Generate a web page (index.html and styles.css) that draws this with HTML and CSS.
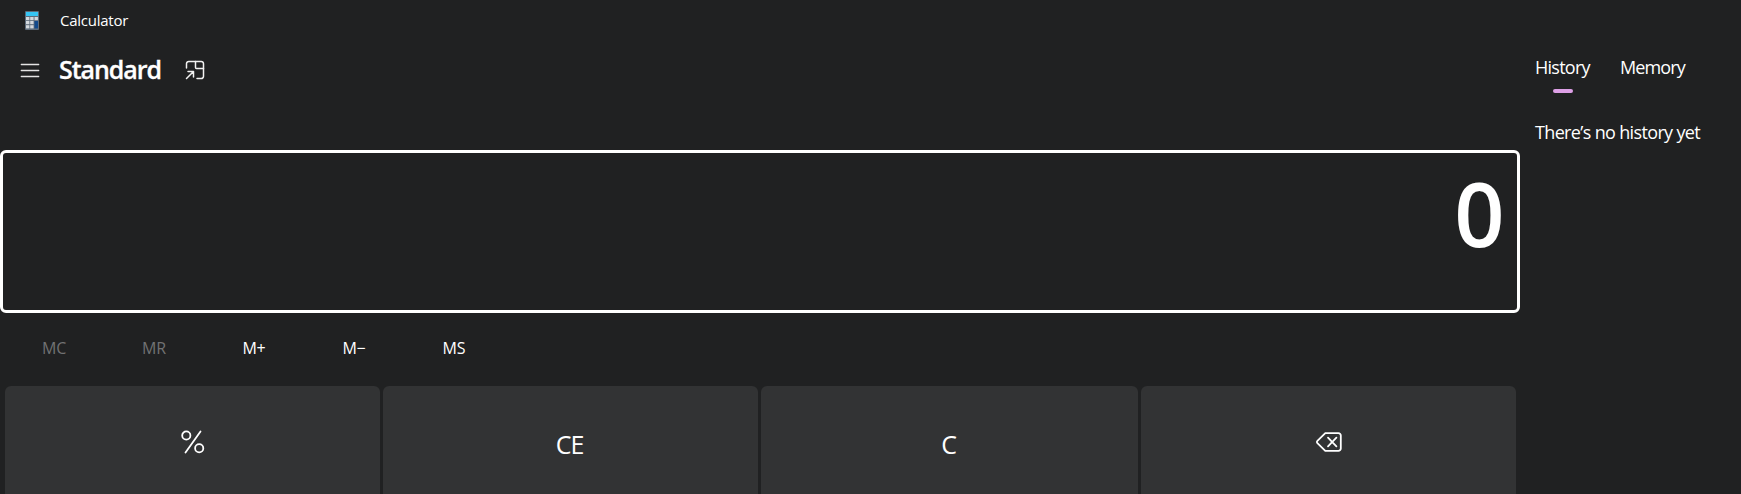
FILE: index.html
```
<!DOCTYPE html>
<html lang="en">
<head>
<meta charset="utf-8">
<title>Calculator</title>
<link rel="stylesheet" href="styles.css">
</head>
<body>
<div class="app">
  <main class="calc">
    <header class="titlebar">
      <svg class="app-icon" width="14" height="19" viewBox="0 0 14 19">
        <rect width="14" height="19" rx="1" fill="#5d6b7a"/>
        <rect x="1" y="1" width="12" height="4" fill="#35c5f4"/>
        <g fill="#d3d8dd">
          <rect x="1" y="6" width="3.4" height="3.2"/><rect x="5.2" y="6" width="3.4" height="3.2"/><rect x="9.5" y="6" width="3.4" height="3.2"/>
          <rect x="1" y="10" width="3.4" height="3.2"/><rect x="5.2" y="10" width="3.4" height="3.2"/>
          <rect x="1" y="14.2" width="3.4" height="3.2"/><rect x="5.2" y="14.2" width="3.4" height="3.2"/>
        </g>
        <rect x="9.5" y="10" width="3.5" height="7.4" fill="#124a8c"/>
      </svg>
      <span class="app-name">Calculator</span>
    </header>
    <div class="modebar">
      <svg class="menu" width="20" height="15" viewBox="0 0 20 15" stroke="#e4e4e4" stroke-width="1.3" stroke-linecap="round">
        <path d="M1.300 1.500H18.700M1.300 7.500H18.700M1.300 13.500H18.700"/>
      </svg>
      <h1 class="mode">Standard</h1>
      <svg class="on-top" width="20" height="20" viewBox="0 0 20 20" fill="none" stroke="#f2f2f2" stroke-width="1.5" stroke-linecap="round" stroke-linejoin="round">
        <path d="M1.500 8V3.700a2.200 2.200 0 0 1 2.200-2.200h12.600a2.200 2.200 0 0 1 2.200 2.200v12.600a2.200 2.200 0 0 1-2.200 2.200H12"/>
        <path d="M10.500 1.500V7.500a1 1 0 0 0 1 1H18.500"/>
        <path d="M1.500 18.500L8.500 11.500M3 11.500H8.500V17"/>
      </svg>
    </div>
    <section class="display"><span class="value">0</span></section>
    <nav class="memory">
      <button class="mem off">MC</button>
      <button class="mem off">MR</button>
      <button class="mem">M+</button>
      <button class="mem">M−</button>
      <button class="mem">MS</button>
    </nav>
    <section class="keys">
      <button class="key"><svg class="glyph" width="24" height="24" viewBox="0 0 24 24" fill="none" stroke="#fff" stroke-width="1.8" stroke-linecap="round">
        <circle cx="5.300" cy="5.500" r="4.100"/><circle cx="18.200" cy="18.300" r="4.100"/><path d="M19.500 1.500L4.500 22.500"/></svg></button>
      <button class="key letters">CE</button>
      <button class="key letters">C</button>
      <button class="key"><svg class="glyph" width="26" height="20" viewBox="0 0 26 20" fill="none" stroke="#fff" stroke-width="1.8" stroke-linecap="round" stroke-linejoin="round">
        <path d="M9.300 1.200H22.400a2.400 2.400 0 0 1 2.400 2.400V16.400a2.400 2.400 0 0 1-2.400 2.400H9.300L1.400 11.100a1.500 1.500 0 0 1 0-2.200Z"/><path d="M12 5.700l8.400 8.600M20.400 5.700L12 14.300"/></svg></button>
    </section>
  </main>
  <aside class="side">
    <div class="tabs">
      <div class="tab active history">History</div>
      <div class="tab recall">Memory</div>
    </div>
    <p class="empty">There’s no history yet</p>
  </aside>
</div>
</body>
</html>
```
FILE: styles.css
```
* { box-sizing: border-box; }
body {
  margin: 0;
  background: #202122;
  color: #fff;
  font-family: "Open Sans", "Noto Sans", sans-serif;
  overflow: hidden;
}
.app { display: flex; height: 494px; overflow: hidden; }
.calc { width: 1520px; flex: none; display: flex; flex-direction: column; }
.titlebar { display: flex; align-items: center; height: 40px; flex: none; padding-left: 25px; }
.app-icon { margin-right: 21px; }
.app-name { font-size: 15px; line-height: 20px; letter-spacing: -0.250px; }
.modebar { display: flex; align-items: center; height: 60px; flex: none; padding-left: 20px; }
.menu { margin: 1px 19px 0 0; }
.mode { margin: 0 0 2px; width: 126px; font-size: 25px; line-height: 34px; font-weight: 600; letter-spacing: -1.050px; -webkit-text-stroke: 0.300px #fff; }
.display {
  height: 163px;
  margin-top: 50px;
  flex: none;
  border: 3px solid #fff;
  border-radius: 6px;
  display: flex;
  justify-content: flex-end;
  padding: 0 13px 0 0;
}
.value { font-size: 88px; line-height: 120px; font-weight: 600; letter-spacing: -0.500px; }
.memory { display: flex; height: 50px; margin: 10px 0 13px 4px; flex: none; }
.mem, .key { border: 0; color: #fff; font-family: inherit; padding: 0; }
.mem { width: 100px; background: none; font-size: 16px; line-height: 50px; letter-spacing: -0.200px; }
.off { color: #717273; }
.keys {
  display: grid;
  grid-template-columns: 375px 375px 377px 375px;
  gap: 3px;
  padding-left: 5px;
}
.key {
  height: 116px;
  border-radius: 6px;
  background: #323334;
  font-size: 25px;
  letter-spacing: -1px;
  display: flex;
  align-items: center;
  justify-content: center;
}
.letters { padding-right: 2px; }
.glyph { margin-bottom: 4px; }
.side { flex: 1; padding: 50px 0 0 15px; }
.tabs { display: flex; }
.tab { font-size: 18px; line-height: 35px; height: 43px; letter-spacing: -0.750px; }
.history { width: 55px; margin-right: 30px; }
.recall { letter-spacing: -0.900px; }
.active::after { content: ""; display: block; width: 20px; height: 4px; margin: 4px 0 0 18px; border-radius: 2px; background: #dda0e6; }
.empty { margin: 22px 0 0; font-size: 18px; line-height: 35px; letter-spacing: -0.650px; white-space: nowrap; }
```
